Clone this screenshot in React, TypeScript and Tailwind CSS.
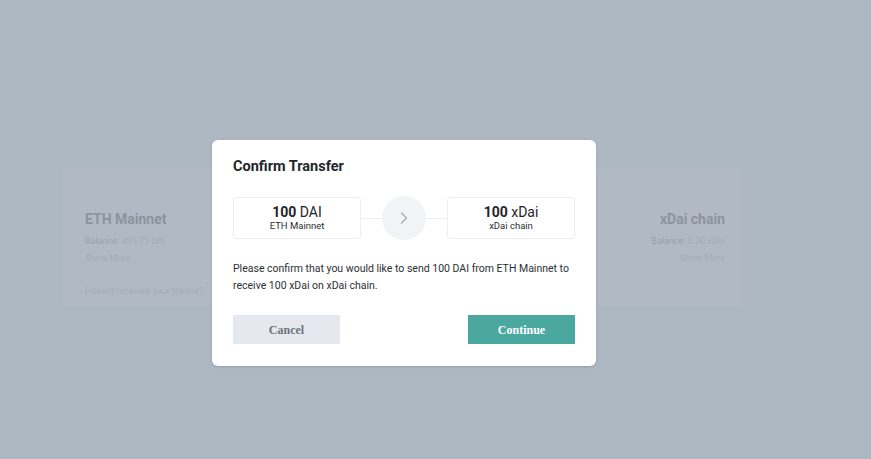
import { ChevronRight } from "lucide-react";

const ChainCard = ({ amount, unit, chain }: { amount: string; unit: string; chain: string }) => (
  <div className="flex h-[42px] w-[128px] flex-col items-center justify-center rounded-[3px] border border-[#eceef1] bg-white">
    <p className="text-[14px] leading-[16px] text-[#1f2328]">
      <span className="font-bold">{amount}</span> {unit}
    </p>
    <p className="text-[9.5px] leading-[12px] text-[#2b2f33]">{chain}</p>
  </div>
);

export default function App() {
  return (
    <div className="relative h-[459px] w-full overflow-hidden bg-[#aeb8c3] font-['Roboto',sans-serif]">
      <div className="ml-[63px] mt-[168px] flex h-[137px] w-[680px] justify-between bg-[#b1bac4] pl-[22px] pr-[18px] pt-[42px]">
        <div>
          <p className="text-[14px] font-bold leading-[18px] text-[#8b949e]">ETH Mainnet</p>
          <p className="mt-[7px] text-[9px] leading-[12px] text-[#98a1ab]">
            Balance: <span className="text-[#a3acb6]">485.73 DAI</span>
          </p>
          <p className="mt-[5px] text-[9px] leading-[12px] text-[#a3acb6]">Show More</p>
          <p className="mt-[21px] text-[9px] leading-[12px] text-[#a3acb6]">Haven't received your tokens?</p>
        </div>
        <div className="text-right">
          <p className="text-[14px] font-bold leading-[18px] text-[#8b949e]">xDai chain</p>
          <p className="mt-[7px] text-[9px] leading-[12px] text-[#98a1ab]">
            Balance: <span className="text-[#a3acb6]">0.00 xDai</span>
          </p>
          <p className="mt-[5px] text-[9px] leading-[12px] text-[#a3acb6]">Show More</p>
        </div>
      </div>

      <div className="absolute left-[212px] top-[140px] w-[384px] rounded-[6px] bg-white px-[21px] pb-[22px] pt-[18px] shadow-sm">
        <h2 className="text-[14.5px] font-bold leading-[18px] text-[#22262a]">Confirm Transfer</h2>

        <div className="relative mt-[20px] flex items-center justify-between">
          <div className="absolute left-0 right-0 top-1/2 h-px bg-[#eceef1]" />
          <div className="relative">
            <ChainCard amount="100" unit="DAI" chain="ETH Mainnet" />
          </div>
          <div className="relative flex h-[44px] w-[44px] items-center justify-center rounded-full bg-[#f2f3f5]">
            <ChevronRight size={20} strokeWidth={1.5} className="text-[#a5abb3]" />
          </div>
          <div className="relative">
            <ChainCard amount="100" unit="xDai" chain="xDai chain" />
          </div>
        </div>

        <p className="mt-[20px] text-[10.5px] leading-[17px] text-[#2b2f33]">
          Please confirm that you would like to send 100 DAI from ETH Mainnet to receive 100 xDai on xDai chain.
        </p>

        <div className="mt-[21px] flex justify-between">
          <button className="h-[29px] w-[107px] bg-[#e5e9ef] font-['Liberation_Serif',serif] text-[12px] font-bold text-[#6d737b]">
            Cancel
          </button>
          <button className="h-[29px] w-[107px] bg-[#4ba8a0] font-['Liberation_Serif',serif] text-[12px] font-bold text-white">
            Continue
          </button>
        </div>
      </div>
    </div>
  );
}
